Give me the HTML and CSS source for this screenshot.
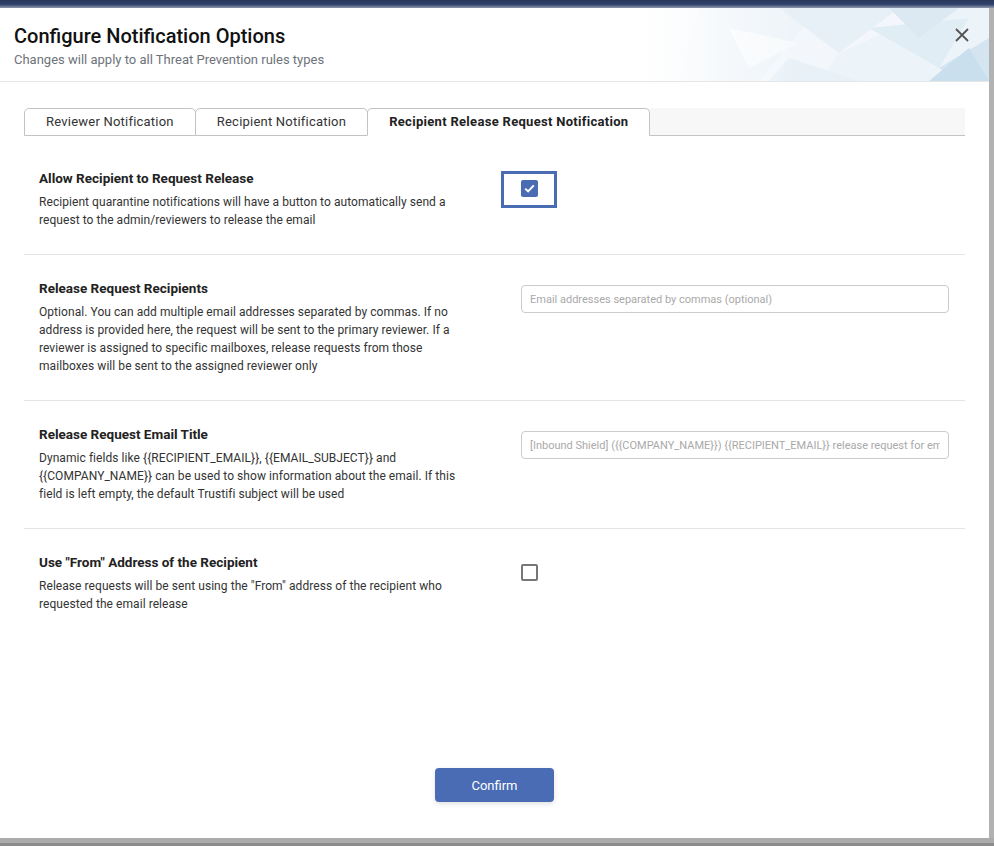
FILE: index.html
```html
<!DOCTYPE html>
<html lang="en">

<head>
    <meta charset="UTF-8">
    <meta name="viewport" content="width=device-width, initial-scale=1.0">
    <title>Configure Notification Options</title>
    <link rel="stylesheet" href="styles.css">
</head>

<body>

    <div class="top-strip"></div>

    <div class="stage">
        <div class="modal">

            <div class="modal-header">
                <svg class="header-art" viewBox="0 0 350 73" preserveAspectRatio="none">
                    <defs>
                        <linearGradient id="fade" x1="0" x2="1" y1="0" y2="0">
                            <stop offset="0" stop-color="#fff" stop-opacity="1" />
                            <stop offset="0.45" stop-color="#fff" stop-opacity="0" />
                        </linearGradient>
                    </defs>
                    <rect width="350" height="73" fill="#f3f7fb" />
                    <polygon points="60,0 180,0 120,73 40,73" fill="#eef4f9" />
                    <polygon points="140,0 260,0 200,45" fill="#e7f0f7" />
                    <polygon points="200,45 300,0 350,0 350,40 290,73 180,73" fill="#edf4f9" />
                    <polygon points="230,20 330,10 300,60" fill="#e1edf5" />
                    <polygon points="250,0 320,0 280,30" fill="#dce9f3" />
                    <polygon points="90,20 160,35 110,60" fill="#f7fafc" />
                    <polygon points="150,50 220,73 130,73" fill="#e9f1f8" />
                    <polygon points="300,60 350,30 350,73 320,73" fill="#d4e5f1" />
                    <polygon points="290,73 330,40 350,73" fill="#cadfee" />
                    <rect width="350" height="73" fill="url(#fade)" />
                </svg>
                <div class="header-text">
                    <h1>Configure Notification Options</h1>
                    <p>Changes will apply to all Threat Prevention rules types</p>
                </div>
                <button class="close-btn" type="button">
                    <svg width="14" height="14" viewBox="0 0 14 14">
                        <path d="M1 1 L13 13 M13 1 L1 13" stroke="#555" stroke-width="1.8" fill="none" />
                    </svg>
                </button>
            </div>

            <div class="modal-body">
                <div class="tabs">
                    <div class="tab">Reviewer Notification</div>
                    <div class="tab">Recipient Notification</div>
                    <div class="tab active">Recipient Release Request Notification</div>
                    <div class="tab-fill"></div>
                </div>

                <div class="option-row first">
                    <div class="option-text">
                        <h3>Allow Recipient to Request Release</h3>
                        <p>Recipient quarantine notifications will have a button to automatically send a request to the admin/reviewers to release the email</p>
                    </div>
                    <div class="option-control">
                        <span class="check checked focused">
                            <svg width="11" height="9" viewBox="0 0 11 9">
                                <path d="M1.2 4.6 L4.1 7.3 L9.8 1.4" stroke="#fff" stroke-width="1.9" fill="none" />
                            </svg>
                        </span>
                    </div>
                </div>

                <div class="option-row">
                    <div class="option-text">
                        <h3>Release Request Recipients</h3>
                        <p>Optional. You can add multiple email addresses separated by commas. If no address is provided here, the request will be sent to the primary reviewer. If a reviewer is assigned to specific mailboxes, release requests from those mailboxes will be sent to the assigned reviewer only</p>
                    </div>
                    <div class="option-control">
                        <input class="text-input" type="text" placeholder="Email addresses separated by commas (optional)">
                    </div>
                </div>

                <div class="option-row">
                    <div class="option-text">
                        <h3>Release Request Email Title</h3>
                        <p>Dynamic fields like {{RECIPIENT_EMAIL}}, {{EMAIL_SUBJECT}} and {{COMPANY_NAME}} can be used to show information about the email. If this field is left empty, the default Trustifi subject will be used</p>
                    </div>
                    <div class="option-control">
                        <input class="text-input" type="text" placeholder="[Inbound Shield] ({{COMPANY_NAME}}) {{RECIPIENT_EMAIL}} release request for email">
                    </div>
                </div>

                <div class="option-row last">
                    <div class="option-text">
                        <h3>Use "From" Address of the Recipient</h3>
                        <p>Release requests will be sent using the "From" address of the recipient who requested the email release</p>
                    </div>
                    <div class="option-control">
                        <span class="check"></span>
                    </div>
                </div>
            </div>

            <div class="modal-footer">
                <button class="btn-confirm" type="button">Confirm</button>
            </div>

        </div>
        <div class="stage-edge"></div>
    </div>

    <div class="bottom-strip"></div>

</body>

</html>
```

FILE: styles.css
```css
* {
    margin: 0;
    padding: 0;
    box-sizing: border-box;
}

body {
    width: 994px;
    height: 846px;
    overflow: hidden;
    background: #b2b2b2;
    font-family: Roboto, "Liberation Sans", Arial, sans-serif;
    color: #222;
}

/* page behind the dialog */
.top-strip {
    height: 8px;
    background: linear-gradient(to bottom, #283859 0, #30426b 55%, #8f98ad 100%);
}

.stage {
    display: flex;
    height: 830px;
}

.stage-edge {
    flex: 1;
    background: #b2b2b2;
}

.bottom-strip {
    height: 8px;
    background: linear-gradient(to bottom, #ababab 0, #ababab 5px, #8c8c8c 5px);
}

/* dialog */
.modal {
    width: 989px;
    height: 830px;
    background: #fff;
    display: flex;
    flex-direction: column;
}

.modal-header {
    position: relative;
    display: flex;
    justify-content: space-between;
    align-items: flex-start;
    height: 74px;
    padding: 16px 20px 0 14px;
    border-bottom: 1px solid #e6e6e6;
}

.header-art {
    position: absolute;
    top: 0;
    right: 0;
    width: 350px;
    height: 73px;
}

.header-text {
    position: relative;
}

.header-text h1 {
    font-size: 20px;
    line-height: 24px;
    font-weight: 500;
    color: #111;
}

.header-text p {
    margin-top: 3px;
    font-size: 13px;
    line-height: 18px;
    color: #6e737b;
}

.close-btn {
    position: relative;
    margin-top: 4px;
    width: 14px;
    height: 14px;
    border: 0;
    background: none;
    cursor: pointer;
}

.close-btn svg {
    display: block;
}

.modal-body {
    flex: 1;
    padding-top: 26px;
}

/* tabs */
.tabs {
    display: flex;
    margin: 0 24px;
    height: 28px;
}

.tab {
    height: 28px;
    padding: 0 21px;
    line-height: 26px;
    font-size: 13px;
    letter-spacing: .22px;
    color: #333;
    background: #fff;
    border: 1px solid #c3c3c3;
    border-radius: 5px 5px 0 0;
    white-space: nowrap;
}

.tab + .tab {
    margin-left: -1px;
}

.tab.active {
    font-weight: 700;
    letter-spacing: .3px;
    color: #222;
    border-bottom-color: #fff;
}

.tab-fill {
    flex: 1;
    background: #f7f7f7;
    border-bottom: 1px solid #c3c3c3;
}

/* option rows */
.option-row {
    display: grid;
    grid-template-columns: 430px 1fr;
    column-gap: 52px;
    margin: 0 24px;
    padding: 25px 16px 25px 15px;
    border-bottom: 1px solid #e4e4e4;
}

.option-row.first {
    margin-top: 9px;
}

.option-row.last {
    border-bottom: 0;
}

.option-text h3 {
    font-size: 13.5px;
    line-height: 16px;
    font-weight: 700;
    color: #222;
}

.option-text p {
    margin-top: 7px;
    font-size: 12px;
    letter-spacing: .06px;
    line-height: 18px;
    color: #333;
}

.option-control {
    padding-top: 5px;
}

.text-input {
    display: block;
    width: 100%;
    height: 28px;
    padding: 0 8px;
    border: 1px solid #cbcbcb;
    border-radius: 4px;
    font-family: Roboto, "Liberation Sans", Arial, sans-serif;
    font-size: 11px;
    color: #333;
    outline: none;
}

.text-input::placeholder {
    color: #a9a9a9;
}

.check {
    position: relative;
    display: flex;
    align-items: center;
    justify-content: center;
    width: 17px;
    height: 17px;
    margin-top: 5px;
    border: 2px solid #777;
    border-radius: 2px;
}

.check.checked {
    background: #4a6cb3;
    border-color: #4a6cb3;
}

.check.focused::after {
    content: "";
    box-sizing: border-box;
    position: absolute;
    left: -22px;
    top: -11px;
    width: 56px;
    height: 37px;
    border: 3px solid #4a6cb3;
}

/* footer */
.modal-footer {
    display: flex;
    justify-content: center;
    padding-bottom: 36px;
}

.btn-confirm {
    width: 119px;
    height: 34px;
    border: 0;
    border-radius: 4px;
    background: #496cb5;
    color: #fff;
    font-family: Roboto, "Liberation Sans", Arial, sans-serif;
    font-size: 13px;
    box-shadow: 0 2px 5px rgba(0, 0, 0, .12);
}
```
